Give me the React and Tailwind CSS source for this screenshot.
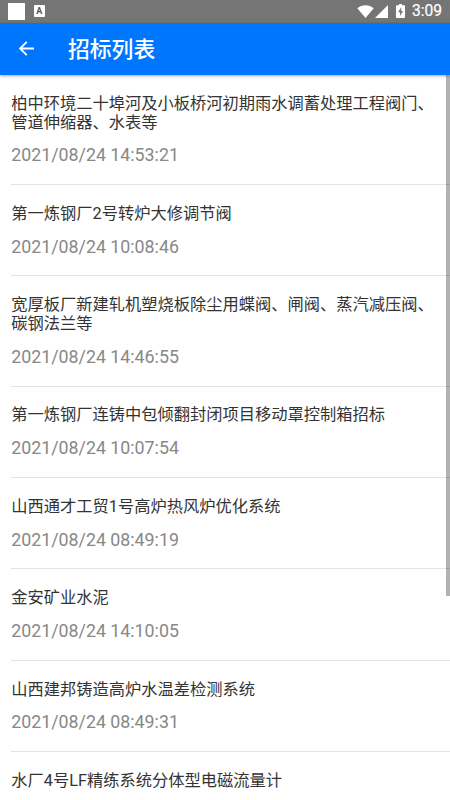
const tenders = [
  { title: '柏中环境二十埠河及小板桥河初期雨水调蓄处理工程阀门、管道伸缩器、水表等', time: '2021/08/24 14:53:21' },
  { title: '第一炼钢厂2号转炉大修调节阀', time: '2021/08/24 10:08:46' },
  { title: '宽厚板厂新建轧机塑烧板除尘用蝶阀、闸阀、蒸汽减压阀、碳钢法兰等', time: '2021/08/24 14:46:55' },
  { title: '第一炼钢厂连铸中包倾翻封闭项目移动罩控制箱招标', time: '2021/08/24 10:07:54' },
  { title: '山西通才工贸1号高炉热风炉优化系统', time: '2021/08/24 08:49:19' },
  { title: '金安矿业水泥', time: '2021/08/24 14:10:05' },
  { title: '山西建邦铸造高炉水温差检测系统', time: '2021/08/24 08:49:31' },
  { title: '水厂4号LF精练系统分体型电磁流量计' },
];

function StatusBar() {
  return (
    <div className="flex h-[22.5px] shrink-0 items-center bg-[#757575] pl-2 pr-[8px] text-white">
      <div className="h-[17px] w-[17px] bg-white" />
      <div className="ml-[9px] flex h-[12px] w-[10.5px] items-center justify-center rounded-[1px] bg-white text-[9px] font-bold leading-none text-[#555]">
        A
      </div>
      <div className="flex-1" />
      {/* Wifi */}
      <svg className="h-[13px] w-[17px]" viewBox="0 0 17 13" fill="currentColor">
        <path d="M0.3 3.2C5-.7 12-.7 16.7 3.2L8.5 13z" />
      </svg>
      {/* Signal */}
      <svg className="ml-[1px] h-[13px] w-[13px]" viewBox="0 0 13 13" fill="currentColor">
        <path d="M13 0v13H0z" />
      </svg>
      {/* Battery */}
      <svg className="ml-[8px] h-[14px] w-[9px]" viewBox="0 0 9 14" fill="currentColor">
        <path d="M3 0h3v1.3h2.2q.8 0 .8.8v11q0 .9-.8.9H.8q-.8 0-.8-.9v-11q0-.8.8-.8H3z" />
        <path d="M5.2 3.3L2 8.3h2.1v3.7L7.1 7H5.2z" fill="#757575" />
      </svg>
      <span className="ml-[6.5px] pt-[2px] text-[15.6px] leading-none [-webkit-text-stroke:0.2px_white]">3:09</span>
    </div>
  );
}

function TenderItem({ title, time }) {
  return (
    <li className="ml-[11.3px] border-b border-[#e3e3e3] pb-[18.8px] pt-[19.8px] last:border-b-0 last:pb-0">
      <p className="w-[427px] text-[16.25px] leading-[18.7px] text-[#333]">{title}</p>
      {time && <p className="mt-[12.1px] text-[17.8px] leading-[21px] text-[#888]">{time}</p>}
    </li>
  );
}

export default function App() {
  return (
    <div className="relative flex h-[800px] w-[450px] flex-col overflow-hidden bg-white font-[Roboto,'Noto_Sans_CJK_SC',sans-serif]">
      <StatusBar />

      {/* Header */}
      <header className="z-10 flex h-[52.5px] shrink-0 items-center bg-[#0076ff] pl-[19px] text-white shadow-[0_1px_3px_rgba(0,0,0,0.35)]">
        <svg className="h-[15px] w-[15px]" viewBox="0 0 15 15" fill="none" stroke="currentColor" strokeWidth="1.8">
          <path d="M15 7.5H1.2M7.8.8L1.1 7.5l6.7 6.7" />
        </svg>
        <h1 className="ml-[34px] pt-[2px] text-[21.8px] font-medium leading-none">招标列表</h1>
      </header>

      {/* Tender list */}
      <ul className="min-h-0 flex-1 overflow-hidden">
        {tenders.map((item) => (
          <TenderItem key={item.title} title={item.title} time={item.time} />
        ))}
      </ul>

      {/* Scroll indicator */}
      <div className="absolute right-0 top-[75px] h-[520.5px] w-[4px] bg-black/30" />
    </div>
  );
}
